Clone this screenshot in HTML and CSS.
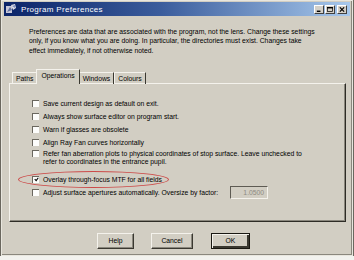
FILE: index.html
```html
<!DOCTYPE html>
<html lang="en">
<head>
    <meta charset="UTF-8">
    <title>Program Preferences</title>
    <link rel="stylesheet" href="styles.css">
</head>
<body>
    <div class="window">
        <div class="titlebar">
            <svg class="app-icon" width="11" height="10" viewBox="0 0 11 10">
                <rect x="0" y="2" width="6" height="7" fill="#c8c8d8"/>
                <path d="M1 8 L4 3 L6 6 Z" fill="#6070a0"/>
                <path d="M5 1 L9 0 L10 4 L7 6 Z" fill="#e0e0e8"/>
                <path d="M6 2 L9 1 L9 4 Z" fill="#8090c0"/>
            </svg>
            <span class="title">Program Preferences</span>
            <div class="caption-btns">
                <span class="cbtn">
                    <svg width="8" height="7" viewBox="0 0 8 7"><rect x="1" y="5" width="5" height="2" fill="#000"/></svg>
                </span>
                <span class="cbtn">
                    <svg width="8" height="7" viewBox="0 0 8 7"><rect x="0.5" y="0.5" width="7" height="6" fill="none" stroke="#000"/><rect x="0" y="0" width="8" height="2" fill="#000"/></svg>
                </span>
                <span class="cbtn close">
                    <svg width="8" height="7" viewBox="0 0 8 7"><path d="M1 0.5 L7 6.5 M7 0.5 L1 6.5" stroke="#000" stroke-width="1.6"/></svg>
                </span>
            </div>
        </div>

        <p class="intro">
            Preferences are data that are associated with the program, not the lens. Change these settings<br>
            only, if you know what you are doing. In particular, the directories must exist. Changes take<br>
            effect immediately, if not otherwise noted.
        </p>

        <div class="tabs">
            <span class="tab">Paths</span>
            <span class="tab active">Operations</span>
            <span class="tab">Windows</span>
            <span class="tab">Colours</span>
        </div>

        <div class="panel">
            <div class="opt"><span class="box"></span><span>Save current design as default on exit.</span></div>
            <div class="opt"><span class="box"></span><span>Always show surface editor on program start.</span></div>
            <div class="opt"><span class="box"></span><span>Warn if glasses are obsolete</span></div>
            <div class="opt"><span class="box"></span><span>Align Ray Fan curves horizontally</span></div>
            <div class="opt multi"><span class="box"></span><span>Refer fan aberration plots to physical coordinates of stop surface. Leave unchecked to<br>refer to coordinates in the entrance pupil.</span></div>
            <div class="opt marked">
                <span class="box checked">
                    <svg width="7" height="7" viewBox="0 0 7 7"><path d="M1 3 L3 5 L6 1" fill="none" stroke="#000" stroke-width="1.5"/></svg>
                </span>
                <span>Overlay through-focus MTF for all fields</span>
                <span class="ring"></span>
            </div>
            <div class="opt"><span class="box"></span><span>Adjust surface apertures automatically. Oversize by factor:</span><span class="field">1.0500</span></div>
        </div>

        <div class="buttons">
            <span class="btn help">Help</span>
            <span class="btn cancel">Cancel</span>
            <span class="btn ok">OK</span>
        </div>
    </div>
</body>
</html>
```

FILE: styles.css
```css
body {
    margin: 0;
    padding: 0;
    background-color: #f2f2ee;
    font-family: 'Liberation Sans', Arial, sans-serif;
    font-size: 6.8px;
    color: #000;
}
.window {
    width: 346px;
    height: 253px;
    background-color: #d2cec3;
    border: 1px solid #e8e6de;
    outline: 1px solid #6a675e;
    box-shadow: inset -1px -1px 0 #8a877d;
    padding: 1px 2px 0 2px;
    margin-left: 1px;
    position: relative;
}
.titlebar {
    height: 14px;
    display: flex;
    align-items: center;
    padding: 0 3px 0 2px;
    background: linear-gradient(to right, #0b2468 0%, #3a5c9c 45%, #a7c8ec 100%);
}
.app-icon {
    margin-right: 4px;
}
.title {
    color: #fff;
    font-size: 8px;
    letter-spacing: 0.3px;
}
.caption-btns {
    margin-left: auto;
    display: flex;
    gap: 1px;
}
.cbtn {
    width: 10px;
    height: 9px;
    background-color: #d4d0c8;
    border: 1px solid;
    border-color: #fff #404040 #404040 #fff;
    box-sizing: border-box;
    display: flex;
    align-items: center;
    justify-content: center;
}
.cbtn svg {
    width: 6px;
    height: 5px;
}
.cbtn.close {
    margin-left: 1px;
}
.intro {
    margin: 11px 0 0 25px;
    line-height: 9.3px;
}
.tabs {
    display: flex;
    align-items: flex-end;
    margin: 14px 0 0 8px;
    height: 15px;
}
.tab {
    height: 12px;
    padding: 0 3px;
    display: flex;
    align-items: center;
    border: 1px solid;
    border-color: #f4f2ec #3a3830 transparent #f4f2ec;
    border-bottom: none;
    box-sizing: border-box;
}
.tab.active {
    height: 15px;
    padding: 0 4px 3px 4px;
    margin: 0 -1px;
    position: relative;
    z-index: 1;
    background-color: #d2cec3;
    border-color: #f4f2ec #3a3830 transparent #f4f2ec;
}
.panel {
    margin: -1px 4px 0 5px;
    height: 139px;
    box-sizing: border-box;
    border: 1px solid;
    border-color: #f4f2ec #2e2c26 #2e2c26 #f4f2ec;
    box-shadow: inset -1px -1px 0 #8a877d;
    padding: 13px 0 0 22px;
}
.opt {
    display: flex;
    align-items: center;
    height: 13px;
    position: relative;
}
.opt.multi {
    align-items: flex-start;
    height: 18px;
    line-height: 8px;
    margin: 1px 0 5px 0;
}
.box {
    width: 7px;
    height: 7px;
    flex-shrink: 0;
    margin-right: 4px;
    background-color: #fdfdfb;
    border-top: 1px solid #6a675e;
    border-left: 1px solid #6a675e;
    box-sizing: border-box;
    display: flex;
    align-items: center;
    justify-content: center;
}
.box svg {
    width: 5px;
    height: 5px;
}
.ring {
    position: absolute;
    left: -14px;
    top: -2px;
    width: 151px;
    height: 17px;
    border: 1px solid #cc4a48;
    border-radius: 50%;
    box-sizing: border-box;
}
.field {
    width: 38px;
    height: 13px;
    margin-left: 12px;
    box-sizing: border-box;
    border: 1px solid;
    border-color: #5e5b53 #f4f2ec #f4f2ec #5e5b53;
    color: #8e8b82;
    display: flex;
    align-items: center;
    justify-content: flex-end;
    padding-right: 3px;
}
.buttons {
    display: flex;
    margin: 11px 0 0 93px;
}
.btn {
    height: 16px;
    box-sizing: border-box;
    display: flex;
    align-items: center;
    justify-content: center;
    border: 1px solid;
    border-color: #f4f2ec #3a3830 #3a3830 #f4f2ec;
    box-shadow: inset -1px -1px 0 #8a877d;
}
.btn.help {
    width: 37px;
}
.btn.cancel {
    width: 42px;
    margin-left: 17px;
}
.btn.ok {
    width: 39px;
    margin-left: 18px;
    border: 1px solid #1a1812;
    box-shadow: inset 1px 1px 0 #f4f2ec, inset -2px -2px 0 #3a3830;
}
```
